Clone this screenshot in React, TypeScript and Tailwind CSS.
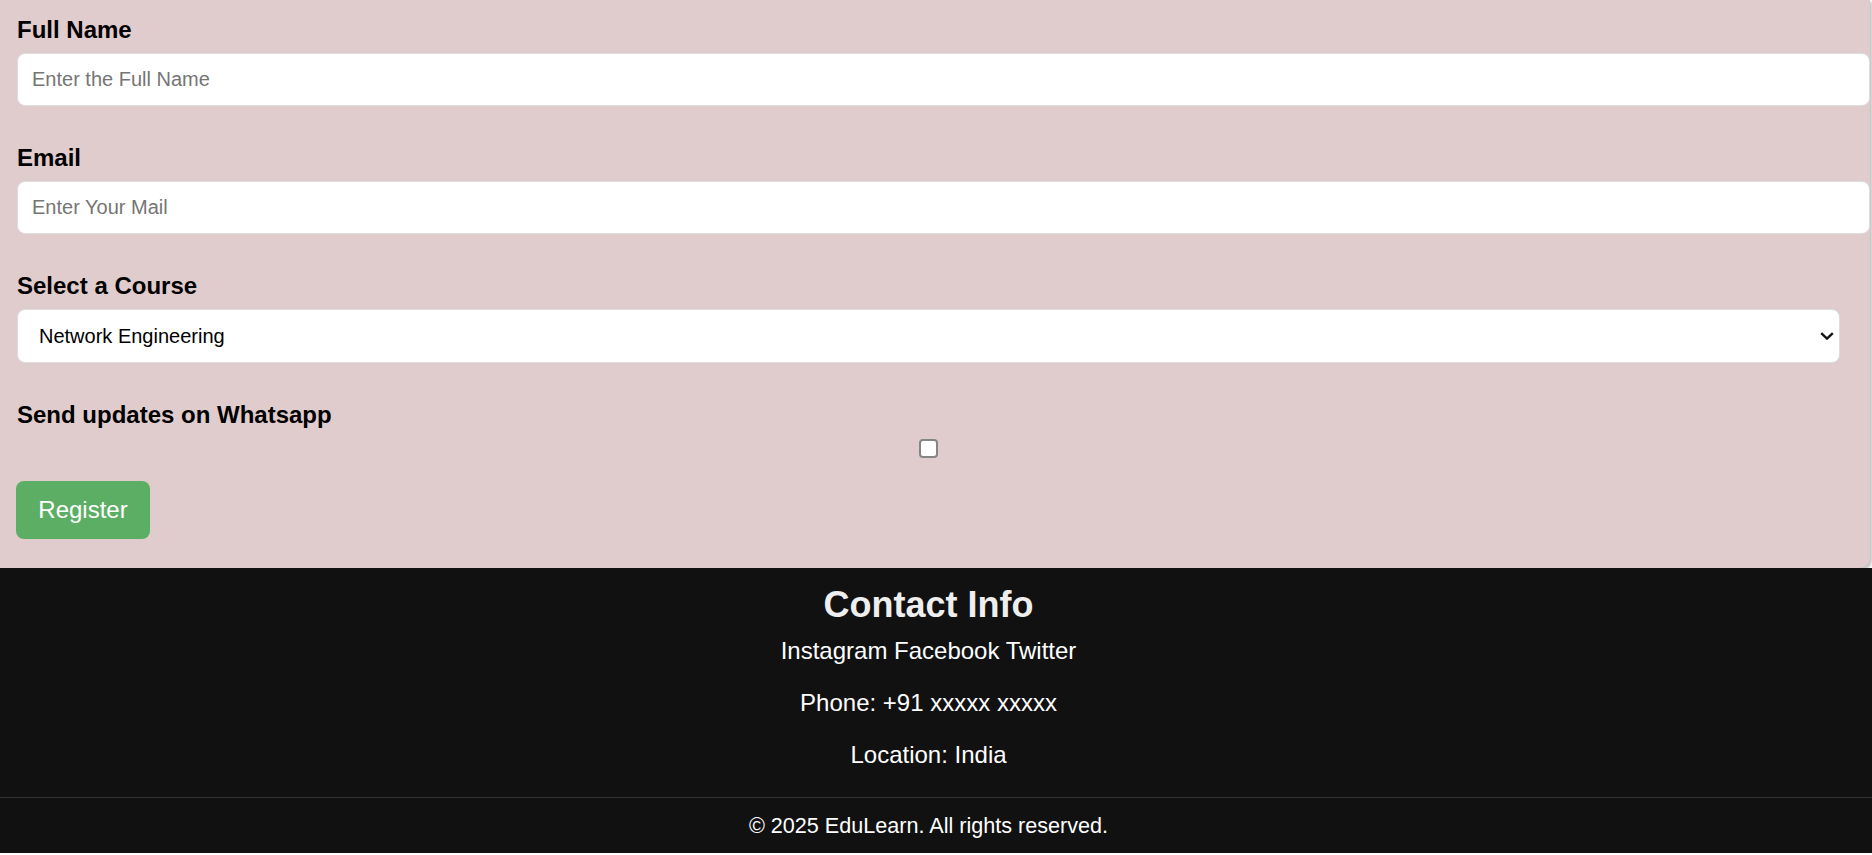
import { useState } from 'react';

const courses = ['Web Development', 'Data Science', 'Network Engineering', 'Cyber Security'];

const App: React.FC = () => {
  const [name, setName] = useState('');
  const [email, setEmail] = useState('');
  const [course, setCourse] = useState('Network Engineering');
  const [whatsapp, setWhatsapp] = useState(false);

  return (
    <div className="min-h-[855px] bg-white font-['Liberation_Sans',Arial,sans-serif] text-black">
      {/* Registration form */}
      <form
        onSubmit={(e) => e.preventDefault()}
        className="w-[1870px] bg-[#e0cccc] pl-[17px] pr-[30px] pt-[16px] pb-[29px] rounded-br-[10px] shadow-[2px_2px_3px_rgba(0,0,0,0.25)]"
      >
        <label htmlFor="name" className="block text-[24px] leading-[28px] font-bold mb-[9px]">
          Full Name
        </label>
        <input
          id="name"
          type="text"
          value={name}
          onChange={(e) => setName(e.target.value)}
          placeholder="Enter the Full Name"
          className="block w-[calc(100%+30px)] h-[53px] mb-[38px] pl-[14px] bg-white border border-[#dddddd] rounded-[8px] text-[20px] placeholder:text-[#757575] outline-none"
        />

        <label htmlFor="email" className="block text-[24px] leading-[28px] font-bold mb-[9px]">
          Email
        </label>
        <input
          id="email"
          type="email"
          value={email}
          onChange={(e) => setEmail(e.target.value)}
          placeholder="Enter Your Mail"
          className="block w-[calc(100%+30px)] h-[53px] mb-[38px] pl-[14px] bg-white border border-[#dddddd] rounded-[8px] text-[20px] placeholder:text-[#757575] outline-none"
        />

        <label htmlFor="course" className="block text-[24px] leading-[28px] font-bold mb-[9px]">
          Select a Course
        </label>
        <div className="relative mb-[38px]">
          <select
            id="course"
            value={course}
            onChange={(e) => setCourse(e.target.value)}
            className="block w-full h-[54px] pl-[21px] bg-white border border-[#dddddd] rounded-[8px] text-[20px] text-black appearance-none outline-none"
          >
            {courses.map((c) => (
              <option key={c} value={c}>
                {c}
              </option>
            ))}
          </select>
          <svg
            className="absolute right-[6px] top-[23px] w-[14px] h-[8px] pointer-events-none"
            viewBox="0 0 14 8"
            fill="none"
          >
            <path d="M1.2 1.2 7 6.6l5.8-5.4" stroke="#111" strokeWidth="2.4" />
          </svg>
        </div>

        <label htmlFor="whatsapp" className="block text-[24px] leading-[28px] font-bold mb-[10px]">
          Send updates on Whatsapp
        </label>
        <input
          id="whatsapp"
          type="checkbox"
          checked={whatsapp}
          onChange={(e) => setWhatsapp(e.target.checked)}
          className="block mx-auto w-[19px] h-[19px] mb-[23px] appearance-none bg-white border-2 border-[#858585] rounded-[4px] checked:bg-[#0075ff] checked:border-[#0075ff]"
        />

        <button
          type="submit"
          className="-ml-px w-[134px] h-[58px] bg-[#5cae64] text-white text-[24px] text-center rounded-[8px]"
        >
          Register
        </button>
      </form>

      {/* Footer */}
      <footer className="bg-[#111111] text-white text-center">
        <div className="pr-[15px] pt-[16px] pb-[28px]">
          <h2 className="text-[36px] leading-[41px] font-bold text-[#eeeeee]">Contact Info</h2>
          <div className="mt-[12px] text-[24px] leading-[28px]">Instagram Facebook Twitter</div>
          <p className="mt-[24px] text-[24px] leading-[28px]">Phone: +91 xxxxx xxxxx</p>
          <p className="mt-[24px] text-[24px] leading-[28px]">Location: India</p>
        </div>
        <div className="border-t border-[#333333] pr-[15px] py-[15px] text-[21.6px] leading-[25px]">
          © 2025 EduLearn. All rights reserved.
        </div>
      </footer>
    </div>
  );
};

export default App;
